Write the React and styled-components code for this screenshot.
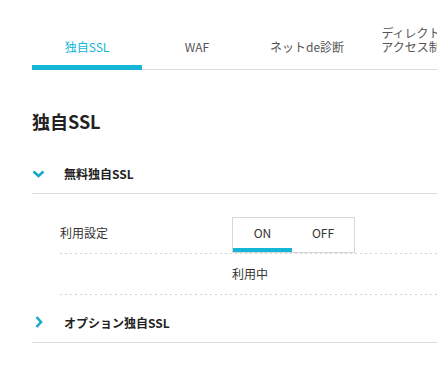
import styled, { createGlobalStyle } from "styled-components";

const GlobalStyle = createGlobalStyle`
  html, body {
    margin: 0;
    padding: 0;
    overflow: hidden;
    background: #fff;
  }
  body {
    font-family: "Noto Sans CJK JP", "Noto Sans", sans-serif;
    color: #333;
  }
`;

const Page = styled.div`
  width: 720px;
  padding: 26px 0 0 32px;
`;

const TabBar = styled.div`
  display: flex;
  align-items: flex-end;
  border-bottom: 1px solid #dcdcdc;
`;

const Tab = styled.div`
  box-sizing: border-box;
  width: 110px;
  padding: 0 14px 11px;
  margin-bottom: -1px;
  text-align: center;
  font-size: 12px;
  line-height: 14px;
  color: ${(p) => (p.$active ? "#15b5d8" : "#555")};
  border-bottom: 5px solid ${(p) => (p.$active ? "#15b5d8" : "transparent")};
  cursor: pointer;
`;

const Title = styled.h1`
  margin: 39px 0 0;
  font-size: 18px;
  line-height: 24px;
  font-weight: 700;
  color: #222;
`;

const AccordionHead = styled.div`
  display: flex;
  align-items: center;
  height: 40px;
  margin-top: ${(p) => p.$top || 0}px;
  border-bottom: 1px solid #dcdcdc;
  cursor: pointer;
`;

const IconBox = styled.div`
  width: 32px;
  display: flex;
  align-items: center;
  padding-left: ${(p) => p.$indent || 0}px;
  padding-top: ${(p) => p.$drop || 0}px;
  box-sizing: border-box;
`;

const HeadLabel = styled.span`
  font-size: 12px;
  font-weight: 700;
  color: #222;
`;

const Panel = styled.div`
  padding: 0 0 7px 28px;
`;

const dotted = `
  background-image: linear-gradient(to right, #d2d2d2 40%, transparent 0);
  background-position: left bottom;
  background-size: 5px 1px;
  background-repeat: repeat-x;
`;

const Row = styled.div`
  display: flex;
  align-items: flex-start;
  padding: ${(p) => p.$pad};
  ${dotted}
`;

const RowLabel = styled.div`
  width: 172px;
  flex-shrink: 0;
  font-size: 12px;
  line-height: 14px;
  padding-top: ${(p) => p.$top || 0}px;
  color: #333;
`;

const RowValue = styled.div`
  font-size: 12px;
  line-height: 14px;
  color: #333;
`;

const Toggle = styled.div`
  display: flex;
  border: 1px solid #d6d6d6;
`;

const ToggleButton = styled.div`
  width: ${(p) => p.$w}px;
  padding: 8px 0;
  text-align: center;
  font-size: 12px;
  line-height: 14px;
  color: #333;
  border-bottom: 4px solid ${(p) => (p.$active ? "#15b5d8" : "transparent")};
  cursor: pointer;
`;

const ChevronDown = () => (
  <svg width="13" height="8" viewBox="0 0 13 8">
    <polyline
      points="1.5,1.5 6.5,6 11.5,1.5"
      fill="none"
      stroke="#15a9cc"
      strokeWidth="2.6"
      strokeLinejoin="miter"
    />
  </svg>
);

const ChevronRight = () => (
  <svg width="8" height="12" viewBox="0 0 8 12">
    <polyline
      points="1.5,1 6,6 1.5,11"
      fill="none"
      stroke="#15a9cc"
      strokeWidth="2.6"
      strokeLinejoin="miter"
    />
  </svg>
);

const tabs = ["独自SSL", "WAF", "ネットde診断", "ディレクトリアクセス制限"];

const App = () => {
  return (
    <Page>
      <GlobalStyle />
      <TabBar>
        {tabs.map((t, i) => (
          <Tab key={t} $active={i === 0}>
            {t}
          </Tab>
        ))}
      </TabBar>

      <Title>独自SSL</Title>

      <AccordionHead $top={20}>
        <IconBox $drop={2}>
          <ChevronDown />
        </IconBox>
        <HeadLabel>無料独自SSL</HeadLabel>
      </AccordionHead>

      <Panel>
        <Row $pad="23px 0 1px">
          <RowLabel $top={9}>利用設定</RowLabel>
          <Toggle>
            <ToggleButton $w={59} $active>
              ON
            </ToggleButton>
            <ToggleButton $w={62}>OFF</ToggleButton>
          </Toggle>
        </Row>
        <Row $pad="13px 0 14px">
          <RowLabel />
          <RowValue>利用中</RowValue>
        </Row>
      </Panel>

      <AccordionHead>
        <IconBox $indent={3}>
          <ChevronRight />
        </IconBox>
        <HeadLabel>オプション独自SSL</HeadLabel>
      </AccordionHead>
    </Page>
  );
};

export default App;
